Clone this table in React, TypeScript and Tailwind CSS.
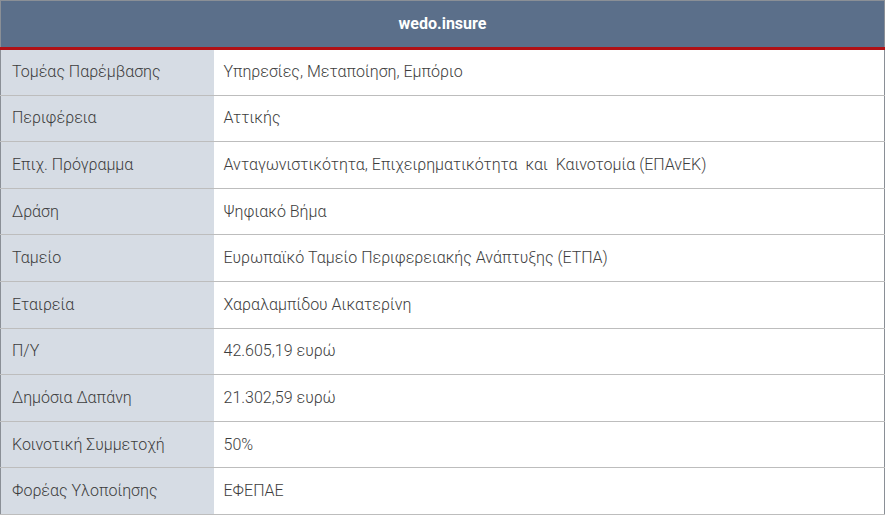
const rows: [string, string][] = [
  ["Τομέας Παρέμβασης", "Υπηρεσίες, Μεταποίηση, Εμπόριο"],
  ["Περιφέρεια", "Αττικής"],
  ["Επιχ. Πρόγραμμα", "Ανταγωνιστικότητα, Επιχειρηματικότητα  και  Καινοτομία (ΕΠΑνΕΚ)"],
  ["Δράση", "Ψηφιακό Βήμα"],
  ["Ταμείο", "Ευρωπαϊκό Ταμείο Περιφερειακής Ανάπτυξης (ΕΤΠΑ)"],
  ["Εταιρεία", "Χαραλαμπίδου Αικατερίνη"],
  ["Π/Υ", "42.605,19 ευρώ"],
  ["Δημόσια Δαπάνη", "21.302,59 ευρώ"],
  ["Κοινοτική Συμμετοχή", "50%"],
  ["Φορέας Υλοποίησης", "ΕΦΕΠΑΕ"],
];

export default function App() {
  return (
    <div className="w-[889px] h-[520px] bg-white font-['Roboto',sans-serif]">
      <table className="w-[885px] border-collapse table-fixed">
        <colgroup>
          <col className="w-[213px]" />
          <col />
        </colgroup>
        <thead>
          <tr>
            <th
              colSpan={2}
              className="h-[48px] bg-[#5b6f8a] text-white text-[16px] font-bold text-center border-x border-t border-[#8a8f96] border-b-[3px] border-b-[#b01116]"
            >
              wedo.insure
            </th>
          </tr>
        </thead>
        <tbody>
          {rows.map(([label, value], i) => (
            <tr key={i} className="h-[46.6px]">
              <td className="bg-[#d6dce4] pl-[11px] text-[16px] font-light text-[#3d3d3d] border-b border-[#bdbdbd] border-l border-l-[#8a8f96] whitespace-pre">
                {label}
              </td>
              <td className="pl-[10px] text-[16px] font-light text-[#3d3d3d] border-b border-[#bdbdbd] border-r border-r-[#8a8f96] whitespace-pre">
                {value}
              </td>
            </tr>
          ))}
        </tbody>
      </table>
    </div>
  );
}
